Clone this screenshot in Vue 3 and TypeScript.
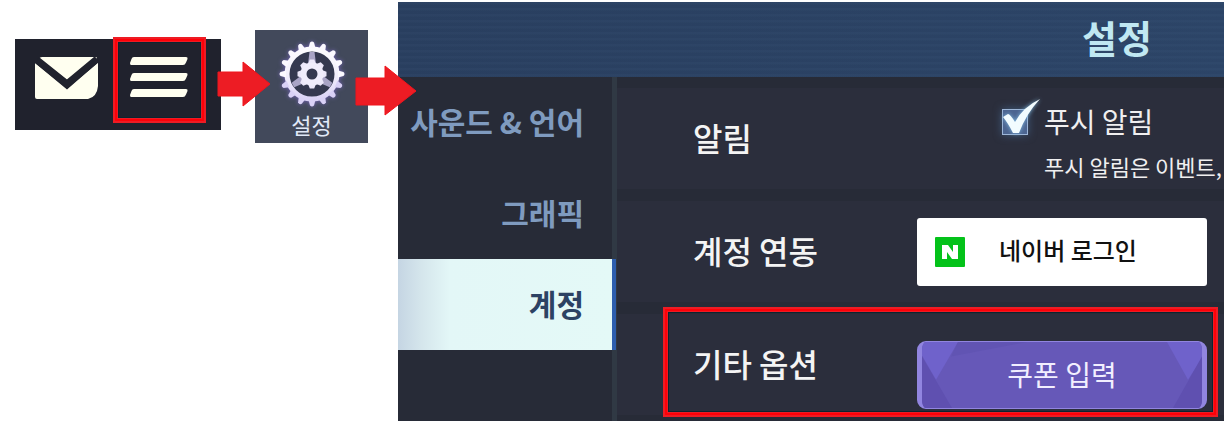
<script setup lang="ts">
import { ref } from 'vue'

const tabs: string[] = ['사운드 & 언어', '그래픽', '계정']
const active = ref<string>('계정')
const push = ref<boolean>(true)

const spin = (count: number): number[] =>
  Array.from({ length: count }, (_, i) => (i * 360) / count)
const outerTeeth = spin(16)
const innerTeeth = spin(8)
const spokes = spin(3)
</script>

<template>
  <main class="guide">
    <div class="toolbar">
      <button class="tool" type="button" aria-label="우편">
        <svg width="64" height="42" viewBox="0 0 64 42" fill="#fffff0">
          <path d="M4 1.5Q5 0 7 0H61Q62.500 0 61.500 1.500L32 23Z" />
          <path d="M0 6L32 32.500L63 5.500V29Q62 40 53 42H2Q0 42 0 40Z" />
          <path d="M2 3L32 27L62 2" fill="none" stroke="#20222d" stroke-width="7" />
        </svg>
      </button>
      <button class="tool marked" type="button" aria-label="메뉴">
        <svg width="58" height="40" viewBox="0 0 58 40" fill="#fffff0">
          <path d="M4 0H56Q58 0 57.500 2L56 5.500Q55 8 53 8H1Q0 8 0 6L1.500 2Q2 0 4 0Z" />
          <path d="M4 16H56Q58 16 57.500 18L56 21.500Q55 24 53 24H1Q0 24 0 22L1.500 18Q2 16 4 16Z" />
          <path d="M4 32H56Q58 32 57.500 34L56 37.500Q55 40 53 40H1Q0 40 0 38L1.500 34Q2 32 4 32Z" />
        </svg>
      </button>
      <svg class="arrow first" width="54" height="46" viewBox="0 0 54 46">
        <path d="M1 11H26V1L53 23L26 45V35H1Z" />
      </svg>
    </div>

    <button class="tile" type="button">
      <svg class="gear" width="72" height="72" viewBox="-36 -36 72 72">
        <defs>
          <linearGradient id="metal" gradientUnits="userSpaceOnUse" x1="0" y1="-33" x2="0" y2="33">
            <stop offset="0" stop-color="#ffffff" />
            <stop offset="0.5" stop-color="#f3f0fc" />
            <stop offset="1" stop-color="#d2c9f4" />
          </linearGradient>
        </defs>
        <circle r="25" fill="#353950" />
        <path
          v-for="a in spokes"
          :key="'s' + a"
          d="M-2.500 -22H2.500L4 -10H-4Z"
          fill="#a9a4c6"
          :transform="`rotate(${a})`"
        />
        <circle r="25" fill="none" stroke="url(#metal)" stroke-width="5" />
        <g v-for="a in outerTeeth" :key="'o' + a" :transform="`rotate(${a})`">
          <path d="M-3.500 -26L-2 -31.500Q0 -33.500 2 -31.500L3.500 -26Z" :fill="a > 100 && a < 260 ? '#d9d1f6' : '#fbf9ff'" />
        </g>
        <path
          v-for="a in innerTeeth"
          :key="'i' + a"
          d="M-4 -10L-2.200 -14.500H2.200L4 -10Z"
          fill="#ece8fa"
          :transform="`rotate(${a})`"
        />
        <circle r="8.500" fill="none" stroke="#f0edfc" stroke-width="6" />
      </svg>
      <span>설정</span>
      <svg class="arrow second" width="62" height="52" viewBox="0 0 62 52">
        <path d="M1 13H30V1L61 26L30 50V40H1Z" />
      </svg>
    </button>

    <section class="panel">
      <header><h1>설정</h1></header>
      <div class="body">
        <nav>
          <button
            v-for="tab in tabs"
            :key="tab"
            type="button"
            :class="{ active: tab === active }"
            @click="active = tab"
          >{{ tab }}</button>
        </nav>
        <div class="rows">
          <div class="row">
            <h2>알림</h2>
            <div class="notice">
              <label class="check">
                <span class="box">
                  <input v-model="push" type="checkbox">
                  <svg v-if="push" width="40" height="36" viewBox="0 0 40 36">
                    <path d="M1 18L6 15Q8 15 13 23Q21 8 38 0Q24 15 17 34H11Q6 24 1 18Z" fill="#f2fcff" />
                  </svg>
                </span>
                <span>푸시 알림</span>
              </label>
              <p>푸시 알림은 이벤트,</p>
            </div>
          </div>
          <div class="row">
            <h2>계정 연동</h2>
            <button class="naver" type="button">
              <svg width="30" height="30" viewBox="0 0 30 30">
                <rect width="30" height="30" rx="1" fill="#04c21a" />
                <path d="M7 8H13L18 15V8H23V22H17L12 15V22H7Z" fill="#fff" />
              </svg>
              <span>네이버 로그인</span>
            </button>
          </div>
          <div class="row">
            <h2>기타 옵션</h2>
            <button class="coupon" type="button">
              <svg viewBox="5 0 280 68" preserveAspectRatio="none" aria-hidden="true">
                <path d="M0 0H41L19 39L0 5Z" fill="#6f62cb" />
                <path d="M5 15L35 68H5Z" fill="#5f50b0" />
                <path d="M41 0H110L34 15Z" fill="#6154b3" />
                <path d="M250 0H290V8L271 39Z" fill="#6f62cb" />
                <path d="M285 15V68H256Z" fill="#5f50b0" />
              </svg>
              <span>쿠폰 입력</span>
            </button>
            <div class="outline"></div>
          </div>
        </div>
      </div>
    </section>
  </main>
</template>

<style>
body {
  margin: 0;
  background: #fff;
}
</style>

<style scoped>
.guide {
  display: flex;
  align-items: flex-start;
  min-height: 100vh;
  padding: 2px 0 0 15px;
  box-sizing: border-box;
  overflow: hidden;
  font-family: "Noto Sans CJK KR", sans-serif;
}
button {
  font: inherit;
  border: 0;
  padding: 0;
  cursor: pointer;
}
svg {
  display: block;
}
h1, h2, p {
  margin: 0;
  white-space: nowrap;
}
.toolbar {
  position: relative;
  flex: none;
  display: flex;
  align-items: flex-start;
  gap: 14px;
  margin-top: 35px;
  padding: 0 15px 7px 20px;
  background: linear-gradient(#fff 2px, #20222d 2px);
}
.tool {
  background: none;
  padding-top: 20px;
}
.marked {
  width: 93px;
  height: 86px;
  padding: 0 0 6px 15px;
}
.marked, .outline {
  box-sizing: border-box;
  border: 2px solid #ed1c24;
  box-shadow: inset 0 0 0 2px #ff0008, inset 0 0 0 3px #ed1c24, inset 0 0 0 4px #0b2531;
}
.arrow {
  position: absolute;
  z-index: 2;
  fill: #ed1c24;
  stroke: #f0141c;
  stroke-width: 1px;
}
.first {
  left: 202px;
  top: 24px;
}
.second {
  left: 100px;
  top: 35px;
}
.tile {
  position: relative;
  flex: none;
  width: 113px;
  height: 113px;
  margin: 28px 30px 0 34px;
  padding-bottom: 5px;
  display: flex;
  flex-direction: column;
  align-items: center;
  justify-content: flex-end;
  background: #42495b;
  color: #e1e9f8;
  font-size: 22px;
  line-height: 28px;
}
.gear {
  filter: drop-shadow(0 0 2px #7566b6);
}
.panel {
  flex: 1;
  min-width: 0;
  background: #272b37;
}
header {
  height: 75px;
  padding: 0 72px 6px 0;
  box-sizing: border-box;
  display: flex;
  align-items: center;
  justify-content: flex-end;
  background:
    repeating-linear-gradient(#ffffff03 0 2px, #00000006 3px 6px),
    linear-gradient(90deg, #2a4061, #2d4669);
}
h1 {
  font-size: 38px;
  line-height: 52px;
  font-weight: 700;
  color: #c0e8f2;
}
.body {
  display: flex;
  min-height: 344px;
}
nav {
  flex: none;
  width: 219px;
  background: linear-gradient(90deg, #272b37 214px, #303944 214px);
}
nav button {
  display: block;
  width: 219px;
  height: 91px;
  padding: 0 33px 4px 0;
  text-align: right;
  white-space: nowrap;
  background: none;
  color: #7f9bbf;
  font-size: 30px;
  font-weight: 700;
}
nav .active {
  color: #2c4263;
  background: linear-gradient(90deg, #c5d5e3, #d5e6ec 24px, #e3f7f7 52px, #e4f9f7 214px, #2d5eae 214px, #2d5eae 218px, #303944 218px);
}
.rows {
  flex: 1;
  min-width: 0;
  display: flex;
  flex-direction: column;
  gap: 12px;
  padding-top: 11px;
}
.row {
  position: relative;
  height: 101px;
  display: grid;
  grid-template-columns: 1fr 290px;
  align-items: center;
  padding: 0 17px 0 76px;
  background: #2b2e3c;
}
h2 {
  padding-bottom: 4px;
  font-size: 32px;
  line-height: 48px;
  font-weight: 500;
  color: #f4f4f4;
}
.notice {
  align-self: end;
  padding-left: 85px;
  line-height: 45px;
  color: #f0eff0;
  white-space: nowrap;
}
.check {
  display: flex;
  align-items: center;
  gap: 16px;
  font-size: 28px;
}
.notice p {
  padding-left: 42px;
  font-size: 22px;
}
.box {
  position: relative;
  width: 26px;
  height: 26px;
}
.box input {
  display: block;
  appearance: none;
  width: 26px;
  height: 26px;
  margin: 0;
  border: 1px solid #9db6d8;
  background: #4c6591;
  box-shadow: 0 0 8px #405b7c;
}
.box svg {
  position: absolute;
  left: 0;
  bottom: 0;
  filter: drop-shadow(0 0 2px #80b8e0);
  pointer-events: none;
}
.naver {
  height: 68px;
  padding-left: 18px;
  display: flex;
  align-items: center;
  gap: 34px;
  border-radius: 3px;
  background: #fff;
  color: #111;
  font-size: 24px;
  font-weight: 500;
}
.naver span {
  padding-bottom: 4px;
}
.coupon {
  position: relative;
  align-self: end;
  height: 68px;
  margin-bottom: 6px;
  padding-bottom: 2px;
  overflow: hidden;
  border: solid #9185e0;
  border-width: 1px 5px;
  border-radius: 9px;
  background: #6658b8;
  color: #f2efff;
  font-size: 28px;
}
.coupon svg {
  position: absolute;
  inset: 0;
  width: 100%;
  height: 100%;
}
.coupon span {
  position: relative;
}
.outline {
  position: absolute;
  inset: -7px 6px -2px 46px;
  pointer-events: none;
}
</style>
